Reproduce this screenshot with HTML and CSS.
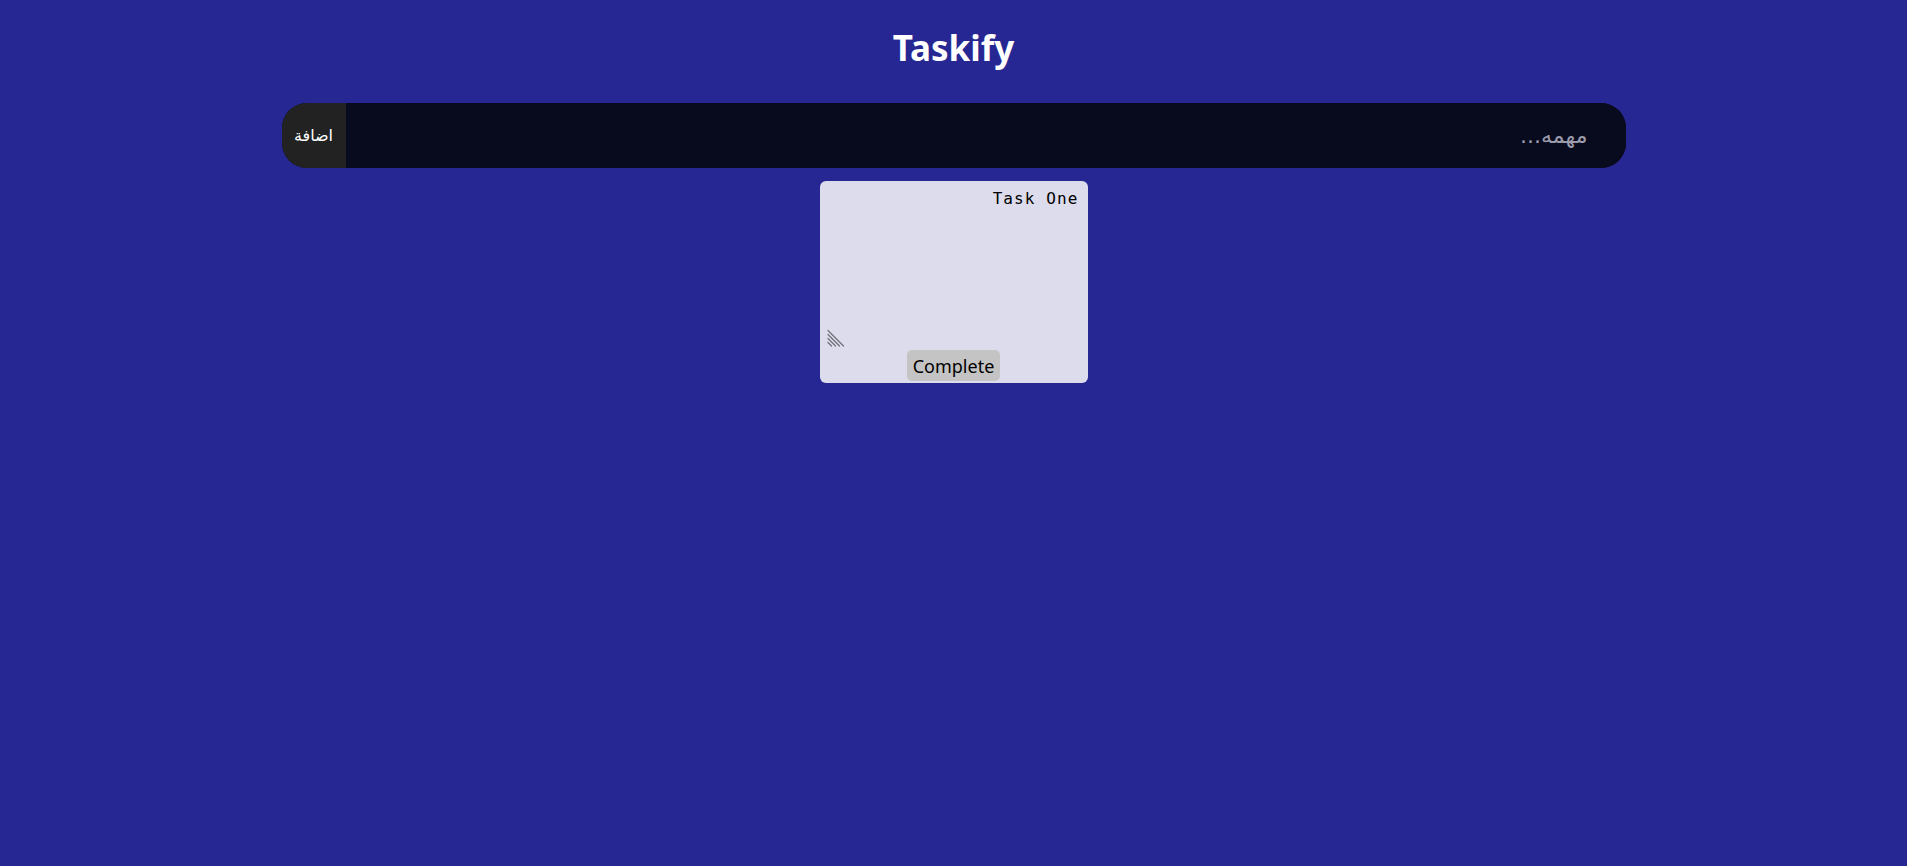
FILE: index.html
```html
<!DOCTYPE html>
<html lang="ar">
<head>
<meta charset="utf-8">
<title>Taskify</title>
<link rel="stylesheet" href="styles.css">
</head>
<body>
<header class="header">
  <h1 class="title">Taskify</h1>
</header>
<form class="add-form" dir="rtl">
  <input class="add-input" type="text" placeholder="مهمه...">
  <button class="add-button" type="button">اضافة</button>
</form>
<section class="tasks">
  <div class="task-card" dir="rtl">
    <textarea class="task-text">Task One</textarea>
    <span class="resize-grip" aria-hidden="true">
      <svg width="18" height="18" viewBox="0 0 18 18">
        <g stroke="#707078" stroke-width="1.2" stroke-linecap="round">
          <line x1="1" y1="1.5" x2="16.5" y2="17"/>
          <line x1="1" y1="5.5" x2="12.5" y2="17"/>
          <line x1="1" y1="9.5" x2="8.5" y2="17"/>
          <line x1="1" y1="13.5" x2="4.5" y2="17"/>
        </g>
      </svg>
    </span>
    <button class="complete-button" type="button" dir="ltr">Complete</button>
  </div>
</section>
</body>
</html>
```
FILE: styles.css
```css
html, body {
  margin: 0;
  padding: 0;
}
body {
  background: #262793;
  font-family: "Noto Sans", "DejaVu Sans", sans-serif;
  min-height: 866px;
}
.header {
  display: flex;
  justify-content: center;
  padding-top: 21px;
}
.title {
  margin: 0;
  color: #ffffff;
  font-size: 35px;
  font-weight: 700;
  line-height: 54px;
}
.add-form {
  display: flex;
  width: 1344px;
  height: 65px;
  margin: 28px auto 0;
  border-radius: 25px;
  overflow: hidden;
  background: #080a1d;
}
.add-input {
  flex: 1;
  border: none;
  outline: none;
  background: #080a1d;
  color: #ffffff;
  font-family: "DejaVu Sans", sans-serif;
  font-size: 22px;
  padding: 0 38px 0 20px;
}
.add-input::placeholder {
  color: #9c9cac;
}
.add-button {
  width: 64px;
  border: none;
  background: #222222;
  color: #ffffff;
  font-family: "DejaVu Sans", sans-serif;
  font-size: 16px;
  padding: 0;
}
.tasks {
  display: flex;
  justify-content: center;
  margin-top: 13px;
}
.task-card {
  position: relative;
  box-sizing: border-box;
  width: 268px;
  height: 202px;
  background: #dcdcec;
  border-radius: 6px;
  display: flex;
  flex-direction: column;
  align-items: center;
  padding: 8px 8px 2px 8px;
}
.task-text {
  box-sizing: border-box;
  width: 100%;
  height: 159px;
  border: none;
  outline: none;
  resize: none;
  background: transparent;
  font-family: "DejaVu Sans Mono", monospace;
  font-size: 16px;
  letter-spacing: 1.1px;
  color: #000000;
  padding: 0 1px;
  margin: 0;
}
.resize-grip {
  position: absolute;
  left: 7px;
  bottom: 36px;
  width: 18px;
  height: 18px;
  display: block;
}
.resize-grip svg {
  display: block;
}
.complete-button {
  margin-top: 3px;
  border: none;
  border-radius: 5px;
  background: #c4c4c4;
  color: #000000;
  font-family: "Noto Sans", sans-serif;
  font-size: 18px;
  height: 31px;
  padding: 0 6px;
}
```
